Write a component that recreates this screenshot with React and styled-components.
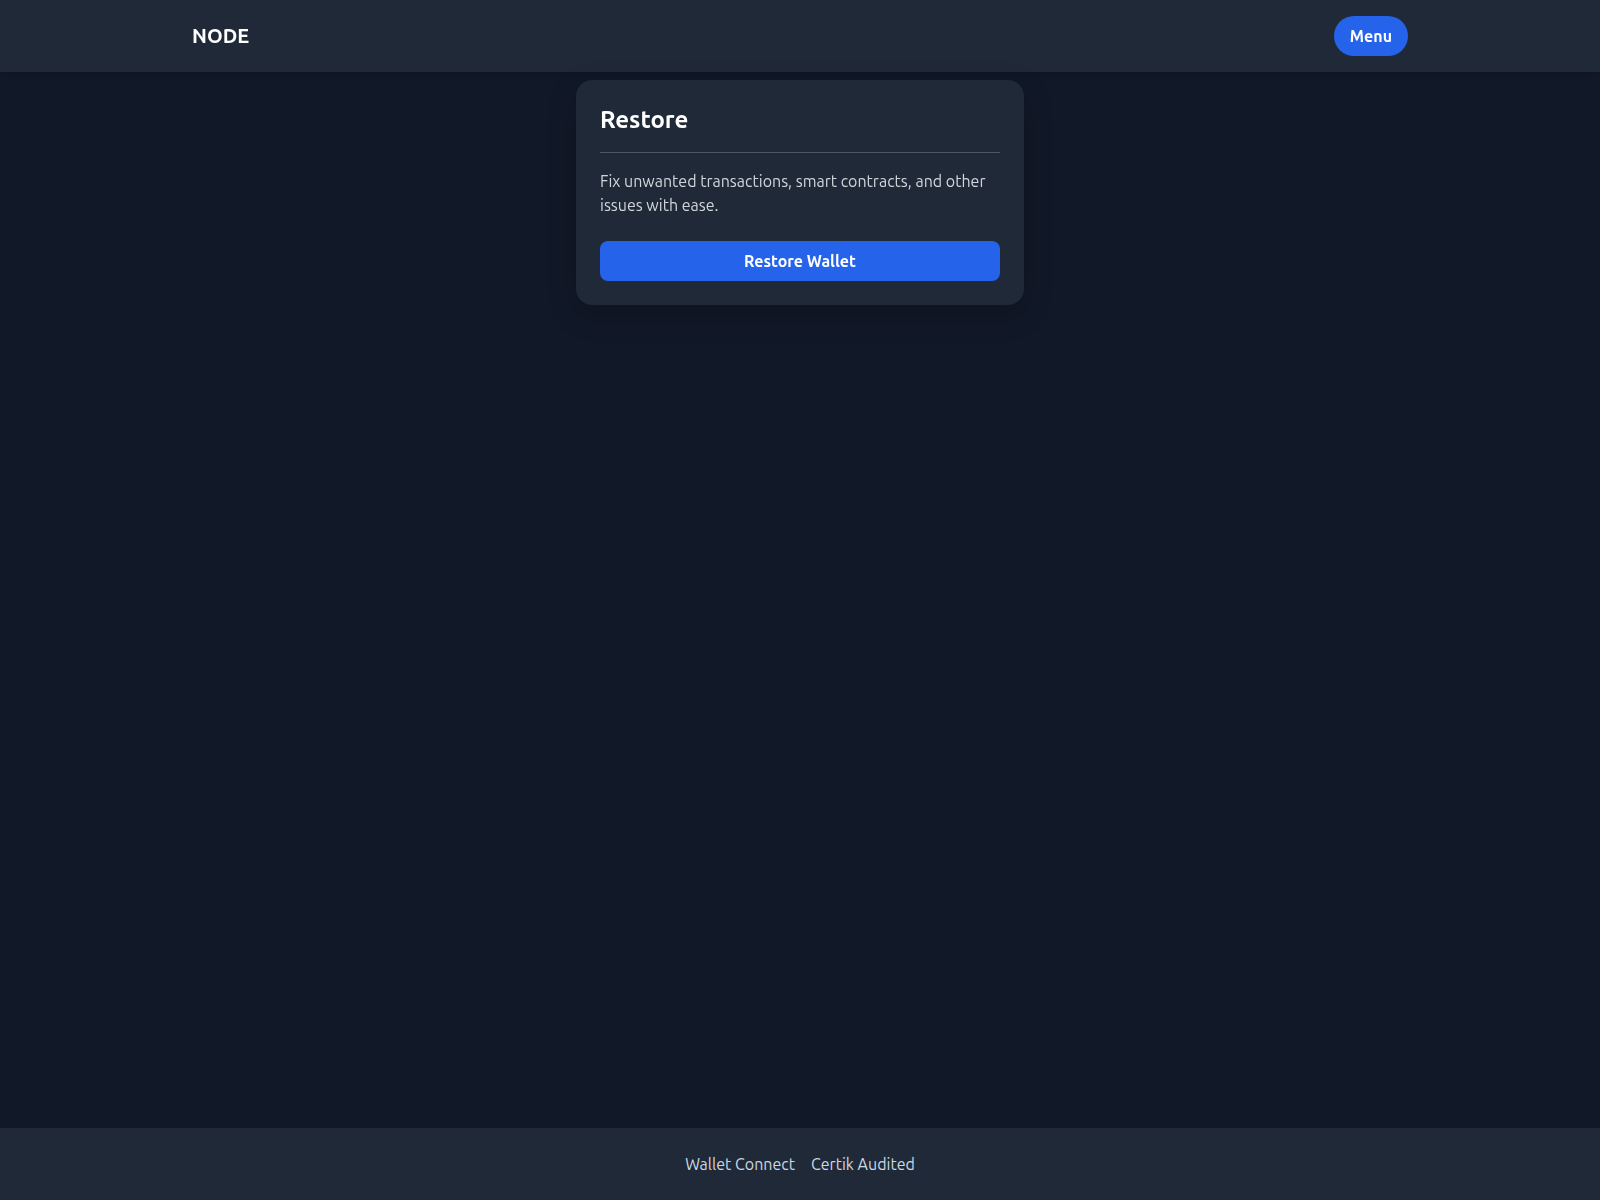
import React from "react";
import styled, { createGlobalStyle } from "styled-components";

const GlobalStyle = createGlobalStyle`
  * { box-sizing: border-box; }
  body {
    margin: 0;
    background: #111827;
    font-family: "Ubuntu", "Noto Sans", "Open Sans", sans-serif;
  }
`;

const Page = styled.div`
  min-height: 1200px;
  display: flex;
  flex-direction: column;
`;

const Header = styled.header`
  background: #1f2937;
  height: 72px;
  backdrop-filter: blur(8px);
  box-shadow: 0 4px 6px -1px rgba(0, 0, 0, 0.1), 0 2px 4px -2px rgba(0, 0, 0, 0.1);
`;

const HeaderInner = styled.div`
  width: 1280px;
  height: 100%;
  margin: 0 auto;
  padding: 0 32px;
  display: flex;
  align-items: center;
  justify-content: space-between;
`;

const Logo = styled.div`
  color: #fff;
  font-size: 20px;
  line-height: 28px;
  font-weight: 700;
`;

const MenuButton = styled.button`
  height: 40px;
  padding: 0 16px;
  border: 0;
  border-radius: 9999px;
  background: #2563eb;
  color: #fff;
  font-family: inherit;
  font-size: 16px;
  font-weight: 700;
`;

const Main = styled.main`
  flex: 1;
  display: flex;
  flex-direction: column;
  align-items: center;
  padding-top: 8px;
`;

const Card = styled.section`
  width: 448px;
  padding: 24px;
  background: #1f2937;
  border-radius: 16px;
  backdrop-filter: blur(8px);
  box-shadow: 0 10px 30px rgba(0, 0, 0, 0.18);
`;

const Title = styled.h2`
  margin: 0 0 16px;
  padding-bottom: 16px;
  border-bottom: 1px solid #4b5563;
  color: #fff;
  font-size: 24px;
  line-height: 32px;
  font-weight: 700;
`;

const Text = styled.p`
  margin: 0 0 24px;
  color: #d1d5db;
  font-size: 16px;
  line-height: 24px;
  font-weight: 400;
`;

const RestoreButton = styled.button`
  display: block;
  width: 100%;
  height: 40px;
  border: 0;
  border-radius: 8px;
  background: #2563eb;
  color: #fff;
  font-family: inherit;
  font-size: 16px;
  font-weight: 700;
`;

const Footer = styled.footer`
  height: 72px;
  background: #1f2937;
  display: flex;
  align-items: center;
  justify-content: center;
  gap: 16px;
`;

const FooterLink = styled.a`
  color: #cbd8e4;
  font-size: 16px;
  font-weight: 400;
  text-decoration: none;
`;

export default function App() {
  return (
    <Page>
      <GlobalStyle />
      <Header>
        <HeaderInner>
          <Logo>NODE</Logo>
          <MenuButton>Menu</MenuButton>
        </HeaderInner>
      </Header>
      <Main>
        <Card>
          <Title>Restore</Title>
          <Text>Fix unwanted transactions, smart contracts, and other issues with ease.</Text>
          <RestoreButton>Restore Wallet</RestoreButton>
        </Card>
      </Main>
      <Footer>
        <FooterLink href="#">Wallet Connect</FooterLink>
        <FooterLink href="#">Certik Audited</FooterLink>
      </Footer>
    </Page>
  );
}
